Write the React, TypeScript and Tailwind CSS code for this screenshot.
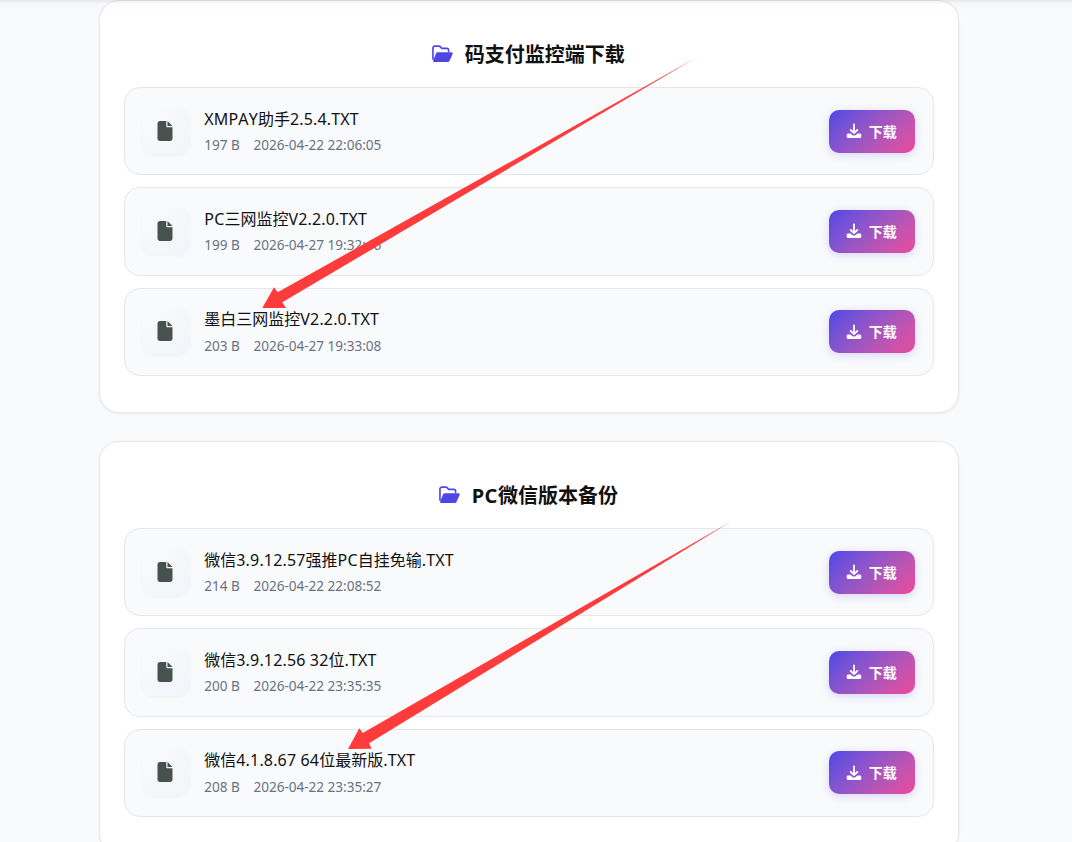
import { FaFile } from "react-icons/fa6";

type Item = { name: string; size: string; date: string };

const fontStack = "font-['Noto_Sans','Noto_Sans_CJK_SC',sans-serif]";

const monitor: Item[] = [
  { name: "XMPAY助手2.5.4.TXT", size: "197 B", date: "2026-04-22 22:06:05" },
  { name: "PC三网监控V2.2.0.TXT", size: "199 B", date: "2026-04-27 19:32:46" },
  { name: "墨白三网监控V2.2.0.TXT", size: "203 B", date: "2026-04-27 19:33:08" },
];

const backup: Item[] = [
  { name: "微信3.9.12.57强推PC自挂免输.TXT", size: "214 B", date: "2026-04-22 22:08:52" },
  { name: "微信3.9.12.56 32位.TXT", size: "200 B", date: "2026-04-22 23:35:35" },
  { name: "微信4.1.8.67 64位最新版.TXT", size: "208 B", date: "2026-04-22 23:35:27" },
];

function FolderIcon() {
  return (
    <svg viewBox="0 0 22 18" className="-mt-px h-[18px] w-[21px] shrink-0 text-[#4f46e5]" fill="currentColor" preserveAspectRatio="none">
      <path
        d="M1 14V3.100C1 2 1.900 1.200 3 1.200h4.200c.6 0 1.100.2 1.500.6l1 1c.4.4.9.6 1.500.6h4.300c1.100 0 1.900.8 1.900 1.900v1"
        fill="none"
        stroke="currentColor"
        strokeWidth="1.7"
        strokeLinecap="round"
      />
      <path d="M6 7.300h14.500c.9 0 1.500.9 1.100 1.700l-3.300 6.900c-.4.7-1 1.100-1.800 1.100H2.400c-1 0-1.600-1-1.100-1.800L4.300 8.300c.3-.6 1-1 1.700-1z" />
    </svg>
  );
}

function DownloadIcon() {
  return (
    <svg viewBox="0 0 16 16" className="size-4 shrink-0" fill="none">
      <path d="M8 1.500V10M4.700 7 8 10.200 11.300 7" stroke="white" strokeWidth="1.800" strokeLinecap="round" strokeLinejoin="round" />
      <path d="M2.200 10.400h2.200L6.300 12c1 .8 2.400.8 3.400 0l1.900-1.600h2.200c.8 0 1.500.7 1.500 1.500v1.700c0 .8-.7 1.500-1.500 1.500H2.200c-.8 0-1.500-.7-1.500-1.500v-1.700c0-.8.7-1.500 1.500-1.500z" fill="white" />
    </svg>
  );
}

function MixedText({ text, tracking }: { text: string; tracking: string }) {
  return (
    <>
      {text.split(/([\x20-\x7e]+)/).filter(Boolean).map((part, i) => (
        <span key={i} className={/[\x20-\x7e]/.test(part) ? tracking : ""}>{part}</span>
      ))}
    </>
  );
}

function Row({ item }: { item: Item }) {
  return (
    <div className="flex h-[88.4px] items-center rounded-2xl border border-gray-200 bg-[#f9fafc] pr-[18px] pl-[16.5px]">
      <div className="-mt-px flex size-12 shrink-0 items-center justify-center rounded-xl bg-linear-to-br from-[#f9fafb] to-[#f1f5f9] pr-px text-[#47524f] shadow-[0_1px_3px_rgba(0,0,0,0.04)]">
        <FaFile className="size-5" />
      </div>
      <div className="ml-[14.5px] flex flex-1 flex-col pt-[1.6px]">
        <div className="h-[26.4px] text-base leading-[26px] whitespace-pre text-[#111]">
          <MixedText text={item.name} tracking="[font-kerning:none] tracking-[0.16px]" />
        </div>
        <div className="flex h-[26px] gap-[13.6px] text-[13.6px] leading-[26px] tracking-[-0.03px] whitespace-pre text-gray-500">
          <span>{item.size}</span>
          <span>{item.date}</span>
        </div>
      </div>
      <button className="flex h-[43px] w-[86px] items-center justify-center gap-[7px] rounded-[10px] bg-linear-135 from-[#4f46e5] to-[#ec4899] pr-[2px] text-sm font-bold text-white shadow-[0_2px_8px_rgba(79,70,229,0.2)]">
        <DownloadIcon />
        <span className="pt-px">下载</span>
      </button>
    </div>
  );
}

function Section({ title, items }: { title: string; items: Item[] }) {
  return (
    <section className="h-[413px] rounded-[20px] border border-gray-200 bg-white px-6 shadow-[0_1px_3px_rgba(0,0,0,0.06)]">
      <h2 className="flex h-[85.6px] items-center justify-center gap-3 pt-[20px] pr-[2px] text-xl font-bold text-[#111]">
        <FolderIcon />
        <span className="pt-[1.4px]"><MixedText text={title} tracking="tracking-[0.5px]" /></span>
      </h2>
      <div className="flex flex-col gap-3">
        {items.map((item) => <Row key={item.name} item={item} />)}
      </div>
    </section>
  );
}

export default function App() {
  return (
    <div className={`relative h-[842px] overflow-hidden bg-[#f9fafc] ${fontStack}`}>
      <main className="ml-[99.3px] flex w-[860px] flex-col gap-[28px] pt-[0.3px]">
        <Section title="码支付监控端下载" items={monitor} />
        <Section title="PC微信版本备份" items={backup} />
      </main>
      <div className="pointer-events-none absolute inset-x-0 top-0 h-4 bg-linear-to-b from-[#1e1e3c]/8 via-[#1e1e3c]/1 via-25% to-transparent" />
      <svg viewBox="0 0 1072 842" className="pointer-events-none absolute inset-0 h-[842px] w-[1072px]" fill="#ff3b3b">
        <path d="M262.300 308 274 287.300 277.700 292.300 695.500 58 282.300 302.300 286 308z" />
        <path d="M348 749 359.300 728.300 362.700 733 731 521.500 369 743.300 371.700 748.700z" />
      </svg>
    </div>
  );
}
